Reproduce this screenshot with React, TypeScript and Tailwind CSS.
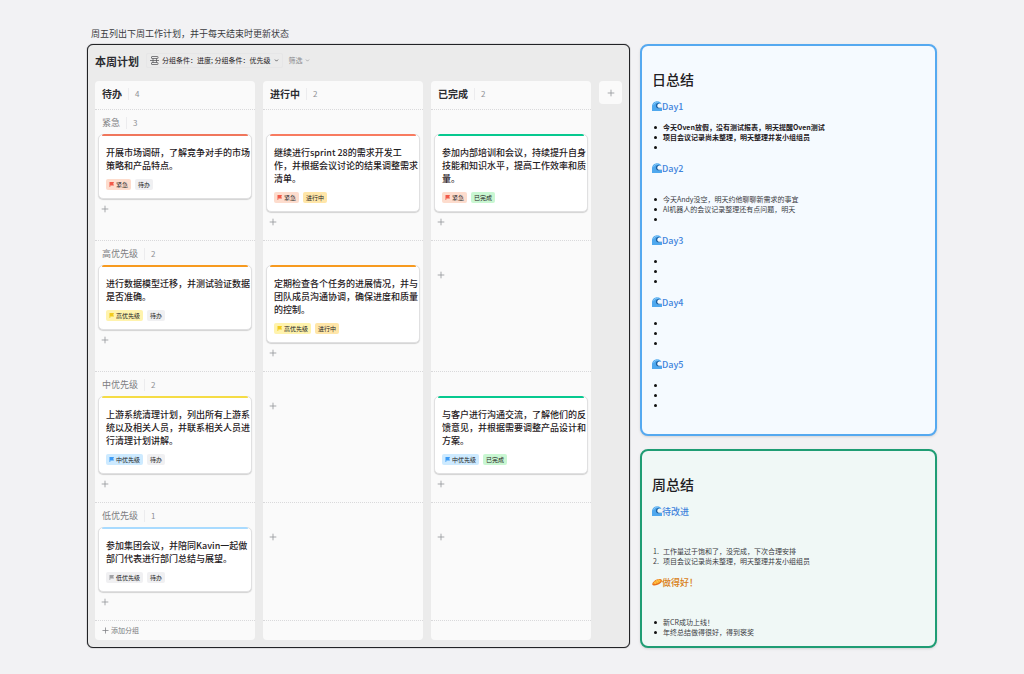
import React from "react";
import { ChevronDown, Plus } from "lucide-react";

interface Card {
  text: string[];
  priority: string;
  status: string;
  bar: string;
}

interface Group {
  name: string;
  count: number;
}

const groups: Group[] = [
  { name: "紧急", count: 3 },
  { name: "高优先级", count: 2 },
  { name: "中优先级", count: 2 },
  { name: "低优先级", count: 1 },
];

const columns: { name: string; count: number; cards: (Card | null)[] }[] = [
  {
    name: "待办",
    count: 4,
    cards: [
      { text: ["开展市场调研，了解竞争对手的市场", "策略和产品特点。"], priority: "紧急", status: "待办", bar: "bg-[#f0765c]" },
      { text: ["进行数据模型迁移，并测试验证数据", "是否准确。"], priority: "高优先级", status: "待办", bar: "bg-[#f79a1f]" },
      { text: ["上游系统清理计划，列出所有上游系", "统以及相关人员，并联系相关人员进", "行清理计划讲解。"], priority: "中优先级", status: "待办", bar: "bg-[#f5dc45]" },
      { text: ["参加集团会议，并陪同Kavin一起做", "部门代表进行部门总结与展望。"], priority: "低优先级", status: "待办", bar: "bg-[#a9dbff]" },
    ],
  },
  {
    name: "进行中",
    count: 2,
    cards: [
      { text: ["继续进行sprint 28的需求开发工", "作，并根据会议讨论的结果调整需求", "清单。"], priority: "紧急", status: "进行中", bar: "bg-[#f87b60]" },
      { text: ["定期检查各个任务的进展情况，并与", "团队成员沟通协调，确保进度和质量", "的控制。"], priority: "高优先级", status: "进行中", bar: "bg-[#f79a1f]" },
      null,
      null,
    ],
  },
  {
    name: "已完成",
    count: 2,
    cards: [
      { text: ["参加内部培训和会议，持续提升自身", "技能和知识水平，提高工作效率和质", "量。"], priority: "紧急", status: "已完成", bar: "bg-[#07c98f]" },
      null,
      { text: ["与客户进行沟通交流，了解他们的反", "馈意见，并根据需要调整产品设计和", "方案。"], priority: "中优先级", status: "已完成", bar: "bg-[#07c98f]" },
      null,
    ],
  },
];

const tagColors: Record<string, string> = {
  紧急: "bg-[#fddccd]",
  高优先级: "bg-[#fff3ad]",
  中优先级: "bg-[#cdeaff]",
  低优先级: "bg-[#f0f0f2]",
  待办: "bg-[#f0f0f2]",
  进行中: "bg-[#ffe6a8]",
  已完成: "bg-[#c9f7d2]",
};

const flagColors: Record<string, string> = {
  紧急: "text-[#f25a4a]",
  高优先级: "text-[#f2cb1d]",
  中优先级: "text-[#3d9bf5]",
  低优先级: "text-[#a0a1a5]",
};

function Tag({ name }: { name: string }) {
  return (
    <span className={`flex h-[11px] items-center gap-[2px] rounded-[2px] px-[3px] text-[6px] leading-none text-[#222] ${tagColors[name]}`}>
      {flagColors[name] && (
        <svg viewBox="0 0 10 10" className={`h-[5px] w-[5px] ${flagColors[name]}`}>
          <path d="M1 0h9L8.500 3.500 10 7H2.500v3H1z" fill="currentColor" />
        </svg>
      )}
      {name}
    </span>
  );
}

function TaskCard({ card }: { card: Card }) {
  return (
    <article className="rounded-[5px] border border-[#e0e0e1] bg-white pb-2 shadow-[0_1px_1px_rgba(0,0,0,0.16)]">
      <div className={`mx-[3px] -mt-px h-[2px] rounded-t-[2px] ${card.bar}`} />
      <p className="mt-[10px] pl-[7px] text-[9px] leading-[13px] font-medium whitespace-nowrap text-[#1f2023]">
        {card.text.map((line) => (
          <span key={line} className="block">{line}</span>
        ))}
      </p>
      <div className="mt-[7px] flex gap-1 px-[7px]">
        <Tag name={card.priority} />
        <Tag name={card.status} />
      </div>
    </article>
  );
}

function AddButton({ label }: { label: string }) {
  return (
    <button type="button" aria-label={label} className="block p-[2px] text-[#96979b]">
      <Plus size={10} strokeWidth={2} />
    </button>
  );
}

function Count({ value }: { value: number }) {
  return (
    <span className="flex h-[12px] items-center border-l border-[#ececee] pl-[6px] text-[8px] leading-none font-normal text-[#8f9094]">
      {value}
    </span>
  );
}

function Board() {
  return (
    <section className="rounded-[6px] border border-[#222326] bg-[#ebebeb] px-[7px] pb-[7px] shadow-[0_0_1px_#222326]">
      <header className="flex h-[36px] items-center">
        <h1 className="pb-[5px] text-[11px] leading-[16px] font-bold text-[#2b2c30]">本周计划</h1>
        <button type="button" className="mb-[5px] ml-[7px] flex h-[15px] items-center gap-[3px] rounded-[2px] border border-[#e6e6e7] px-[3px] text-[7px] text-[#1f2023]">
          <svg viewBox="0 0 18 18" className="h-[9px] w-[9px]" fill="none" stroke="#55565a" strokeWidth="1.500">
            <rect x="3" y="1" width="13" height="4" rx="1" />
            <rect x="3" y="13" width="13" height="4" rx="1" />
            <path d="M0 9h18M6 5v8M13 5v8" />
          </svg>
          分组条件：进度; 分组条件：优先级
          <ChevronDown size={5} strokeWidth={3} />
        </button>
        <button type="button" className="mb-[5px] ml-[6px] flex items-center gap-[2px] text-[7px] text-[#8a8b8f]">
          筛选
          <ChevronDown size={5} strokeWidth={3} />
        </button>
      </header>

      <div className="grid grid-cols-[repeat(3,minmax(0,1fr))_23px] gap-x-2">
        {columns.map((column, c) => (
          <section key={column.name} className="row-span-6 grid grid-cols-[minmax(0,1fr)] grid-rows-subgrid rounded-[4px] bg-[#fafafa]">
            <h2 className="flex h-[28px] items-center gap-[6px] px-[7px] pb-[2px] text-[10px] leading-none font-bold text-[#2b2c30]">
              {column.name}
              <Count value={column.count} />
            </h2>
            {groups.map((group, g) => {
              const card = column.cards[g];
              return (
                <div key={group.name} className="border-t border-dotted border-[#d9d9db] px-[3px] pb-[11px]">
                  <h3 className="flex h-[24px] items-center gap-[6px] px-1 pt-px text-[9px] leading-none text-[#7c7d81]">
                    {c === 0 && (
                      <>
                        {group.name}
                        <Count value={group.count} />
                      </>
                    )}
                  </h3>
                  {card && <TaskCard card={card} />}
                  <div className="pt-[3px]">
                    <AddButton label={`在${group.name}中添加任务`} />
                  </div>
                </div>
              );
            })}
            <div className="h-[20px] border-t border-dotted border-[#d9d9db] px-[6px] pt-1">
              {c === 0 && (
                <button type="button" className="flex items-center gap-px text-[7px] leading-[10px] text-[#7c7d81]">
                  <Plus size={9} strokeWidth={2} />
                  添加分组
                </button>
              )}
            </div>
          </section>
        ))}
        <button type="button" aria-label="添加列" className="grid h-[23px] w-[23px] place-items-center rounded-[4px] bg-[#fafafa] text-[#96979b]">
          <Plus size={10} strokeWidth={2} />
        </button>
      </div>
    </section>
  );
}

function WaveIcon() {
  return (
    <svg viewBox="0 0 36 36" className="h-[10px] w-[10px]">
      <path d="M0 36V20C0 9 8 1 19 1c9 0 14 5 15 11-3-3-8-4-12-2-6 3-6 12 0 15 4 2 9 1 14-2v13z" fill="#4fa8ee" />
      <path d="M14 17C14 9 21 5 28 8c-5 0-9 4-9 9 0 6 6 9 14 7-9 6-19 2-19-7z" fill="#1d5fa0" />
      <path d="M6 13C9 6 15 3 22 4" stroke="#a9dcfb" strokeWidth="2.500" fill="none" />
    </svg>
  );
}

function BreadIcon() {
  return (
    <svg viewBox="0 0 36 36" className="h-[10px] w-[10px]">
      <path d="M1 27C0 18 17 5 29 7c9 1 8 10 2 15C23 29 4 34 1 27z" fill="#e8701a" />
      <path d="M4 23C8 14 20 7 28 9c6 2 4 7-1 10C19 24 8 28 4 23z" fill="#fbae2c" />
      <path d="M9 17l4 7M16 12l5 8M23 9l5 7" stroke="#ffd977" strokeWidth="2.500" />
    </svg>
  );
}

interface NoteProps {
  title: string;
  icon?: "wave" | "bread";
  items: string[];
  bold?: boolean;
  ordered?: boolean;
  listGap?: string;
}

function Note({ title, icon = "wave", items, bold, ordered, listGap = "mt-[9px]" }: NoteProps) {
  const List = ordered ? "ol" : "ul";
  return (
    <section>
      <h3 className={`flex h-[14px] items-center text-[9px] leading-none font-medium ${icon === "wave" ? "text-[#3f83dc]" : "text-[#d97f17]"}`}>
        {icon === "wave" ? <WaveIcon /> : <BreadIcon />}
        {title}
      </h3>
      <List className={`text-[7px] leading-[10px] ${listGap} ${bold ? "font-bold text-[#1f2023]" : "text-[#3a3b3f]"}`}>
        {items.map((item, i) => (
          <li key={i} className="flex h-[10px] items-center">
            {ordered ? (
              <span className="w-[11px] pl-px">{i + 1}.</span>
            ) : (
              <span className="mr-[6px] ml-[2px] h-[3px] w-[3px] rounded-full bg-[#111]" />
            )}
            {item}
          </li>
        ))}
      </List>
    </section>
  );
}

const days: NoteProps[] = [
  { title: "Day1", items: ["今天Oven放假，没有测试报表，明天提醒Oven测试", "项目会议记录尚未整理，明天整理并发小组组员", ""], bold: true },
  { title: "Day2", items: ["今天Andy没空，明天约他聊聊新需求的事宜", "AI机器人的会议记录整理还有点问题，明天", ""], listGap: "mt-[19px]" },
  { title: "Day3", items: ["", "", ""] },
  { title: "Day4", items: ["", "", ""] },
  { title: "Day5", items: ["", "", ""] },
];

const watermarks = [
  "top-[17%] left-[16%]",
  "top-[17%] left-[59%]",
  "top-[51%] left-[38%]",
  "top-[53%] left-[81%]",
  "top-[83%] left-[16%]",
  "top-[83%] left-[60%]",
];

function Watermarks() {
  return (
    <div aria-hidden="true" className="pointer-events-none absolute inset-0 overflow-hidden">
      {watermarks.map((place) => (
        <p
          key={place}
          className={`absolute -translate-x-1/2 -translate-y-1/2 -rotate-45 text-center font-['Liberation_Serif','Noto_Sans_CJK_SC',serif] text-[20px] leading-[24px] whitespace-nowrap text-black/1 ${place}`}
        >
          wangyuling
          <br />
          10.10.24.44
          <br />
          陌思
          <br />
          2025/01/07 10:54
        </p>
      ))}
    </div>
  );
}

function App() {
  return (
    <main className="relative min-h-screen bg-[#f2f2f4] px-[87px] pt-[27px] pb-[25px] font-['Noto_Sans_CJK_SC',sans-serif]" lang="zh-CN">
      <p className="px-1 pb-1 text-[9px] leading-[13px] text-[#3a3b3f]">周五列出下周工作计划，并于每天结束时更新状态</p>
      <div className="grid grid-cols-[minmax(0,543fr)_minmax(0,297fr)] gap-[10px]">
        <Board />
        <div className="flex flex-col gap-[13px]">
          <section className="rounded-[8px] border-2 border-[#55a9f0] bg-[#f5faff] px-[10px] pt-[23px] pb-[24px] shadow-sm">
            <h2 className="mb-[10px] text-[14px] leading-[20px] font-medium text-[#1f2023]">日总结</h2>
            <div className="flex flex-col gap-[9px]">
              {days.map((day) => (
                <Note key={day.title} {...day} />
              ))}
            </div>
          </section>
          <section className="grow rounded-[8px] border-2 border-[#1f9d74] bg-[#f0f8f6] px-[10px] pt-[23px] shadow-sm">
            <h2 className="mb-[10px] text-[14px] leading-[20px] font-medium text-[#1f2023]">周总结</h2>
            <div className="flex flex-col gap-[9px]">
              <Note title="待改进" items={["工作量过于饱和了，没完成，下次合理安排", "项目会议记录尚未整理，明天整理并发小组组员"]} ordered listGap="mt-[28px]" />
              <Note title="做得好！" icon="bread" items={["新CR成功上线！", "年终总结做得很好，得到褒奖"]} listGap="mt-[28px]" />
            </div>
          </section>
        </div>
      </div>
      <Watermarks />
    </main>
  );
}

export default App;
